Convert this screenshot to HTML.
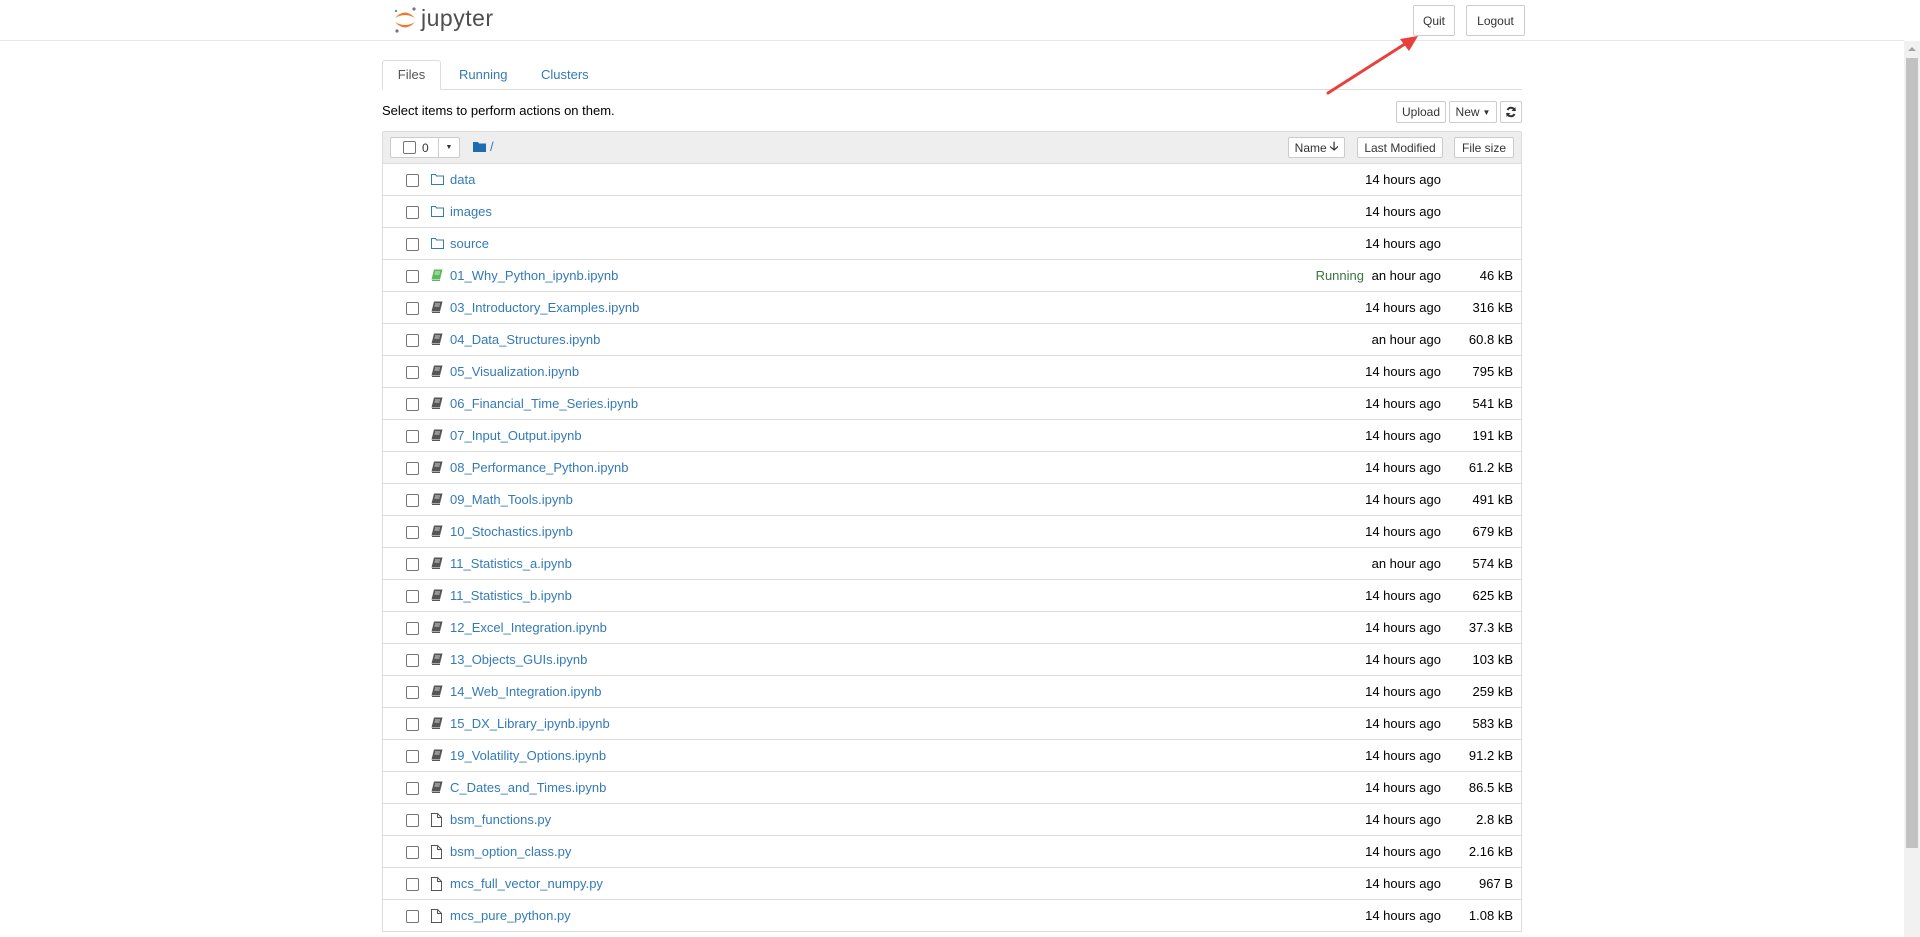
<!DOCTYPE html>
<html><head><meta charset="utf-8"><style>
*{box-sizing:border-box}
body{margin:0;width:1920px;height:937px;overflow:hidden;background:#fff;font-family:"Liberation Sans",Arial,sans-serif;font-size:13px;color:#000;position:relative}
.abs{position:absolute}
.btn{position:absolute;border:1px solid #ccc;background:#fff;border-radius:2px;font-size:12px;color:#333;text-align:center;display:flex;align-items:center;justify-content:center}
a{color:#337ab7;text-decoration:none}
.row{position:absolute;left:382px;width:1140px;height:32px;border-bottom:1px solid #ddd;border-left:1px solid #ddd;border-right:1px solid #ddd}
.cb{position:absolute;left:23px;top:10px;width:13px;height:13px;border:1px solid #767676;border-radius:2px;background:#fff}
.ic{position:absolute;left:48px;top:9px}
.nm{position:absolute;left:67px;top:8px;font-size:13px;color:#337ab7}
.tm{position:absolute;right:80px;top:8px;text-align:right}
.sz{position:absolute;right:8px;top:8px;text-align:right}
.run{position:absolute;right:157px;top:8px;color:#3c763d}
</style></head><body>
<!-- header -->
<svg class="abs" style="left:393px;top:6px" width="24" height="28" viewBox="0 0 24 28">
<path d="M2 12 Q12 1 22 12 Q12 6 2 12Z" fill="#f37726"/>
<path d="M2 16 Q12 27 22 16 Q12 22 2 16Z" fill="#f37726"/>
<circle cx="21" cy="3" r="1.6" fill="#767677"/><circle cx="3" cy="5" r="1.1" fill="#767677"/><circle cx="4" cy="25" r="1.6" fill="#767677"/>
</svg>
<div class="abs" style="left:421px;top:5px;font-size:23px;color:#4e4e4e;letter-spacing:0.5px">jupyter</div>
<div class="btn" style="left:1413px;top:5px;width:42px;height:31px">Quit</div>
<div class="btn" style="left:1466px;top:5px;width:59px;height:31px">Logout</div>
<div class="abs" style="left:0;top:40px;width:1904px;height:1px;background:#e7e7e7"></div>
<!-- scrollbar -->
<div class="abs" style="left:1904px;top:41px;width:16px;height:896px;background:#f1f1f1"></div>
<div class="abs" style="left:1906px;top:58px;width:12px;height:790px;background:#c1c1c1"></div>
<div class="abs" style="left:1908px;top:47px;width:0;height:0;border-left:4px solid transparent;border-right:4px solid transparent;border-bottom:4px solid #a3a3a3"></div>
<!-- tabs -->
<div class="abs" style="left:382px;top:89px;width:1140px;height:1px;background:#ddd"></div>
<div class="abs" style="left:382px;top:60px;width:59px;height:30px;border:1px solid #ddd;border-bottom:1px solid #fff;border-radius:3px 3px 0 0;background:#fff;text-align:center;line-height:28px;color:#555">Files</div>
<div class="abs" style="left:459px;top:67px;color:#337ab7">Running</div>
<div class="abs" style="left:541px;top:67px;color:#337ab7">Clusters</div>
<div class="abs" style="left:382px;top:103px">Select items to perform actions on them.</div>
<div class="btn" style="left:1396px;top:101px;width:50px;height:22px">Upload</div>
<div class="btn" style="left:1449px;top:101px;width:48px;height:22px">New <span style="font-size:8px;margin-left:3px">▼</span></div>
<div class="btn" style="left:1500px;top:101px;width:22px;height:22px"><svg width="12" height="12" viewBox="0 0 12 12"><path d="M10 5A4 4 0 0 0 2.5 4M2 7A4 4 0 0 0 9.5 8" stroke="#333" stroke-width="2" fill="none"/><path d="M10.5 1v4h-4z M1.5 11V7h4z" fill="#333"/></svg></div>
<!-- list header -->
<div class="abs" style="left:382px;top:131px;width:1140px;height:33px;background:#eee;border:1px solid #ddd;border-radius:2px 2px 0 0"></div>
<div class="btn" style="left:390px;top:137px;width:49px;height:21px;justify-content:flex-start;padding-left:12px;border-radius:2px 0 0 2px"><span style="display:inline-block;width:13px;height:13px;border:1px solid #767676;border-radius:2px;margin-right:6px"></span>0</div>
<div class="btn" style="left:438px;top:137px;width:22px;height:21px;border-radius:0 2px 2px 0;font-size:7px">▼</div>
<svg class="abs" style="left:473px;top:141px" width="13" height="11" viewBox="0 0 13 11"><path d="M0 1h5l1 1.5h7V11H0z" fill="#1e6cb0"/></svg>
<div class="abs" style="left:490px;top:139px;color:#337ab7">/</div>
<div class="btn" style="left:1288px;top:137px;width:57px;height:21px">Name <b style="margin-left:3px">🡣</b></div>
<div class="btn" style="left:1357px;top:137px;width:86px;height:21px">Last Modified</div>
<div class="btn" style="left:1454px;top:137px;width:60px;height:21px">File size</div>

<div id="rows"></div>
<script>
var F='<svg width="13" height="12" viewBox="0 0 13 12"><path d="M.5 1.5h4l1 1.5h7v8.5H.5z" fill="none" stroke="#337ab7"/></svg>';
var B=function(c){return '<svg width="12" height="12" viewBox="0 0 12 12"><path d="M3 .5h8.5L9 10.5H.5z" fill="'+c+'"/><path d="M1 11.5h8" stroke="'+c+'"/><path d="M4 3h5M3.5 5h5" stroke="#fff" stroke-width=".8"/></svg>'};
var P='<svg width="11" height="14" viewBox="0 0 11 14"><path d="M.5.5h6l4 4v9H.5z M6.5.5v4h4" fill="none" stroke="#555"/></svg>';
var rows=[
["data","F","14 hours ago",""],["images","F","14 hours ago",""],["source","F","14 hours ago",""],
["01_Why_Python_ipynb.ipynb","R","an hour ago","46 kB"],
["03_Introductory_Examples.ipynb","B","14 hours ago","316 kB"],
["04_Data_Structures.ipynb","B","an hour ago","60.8 kB"],
["05_Visualization.ipynb","B","14 hours ago","795 kB"],
["06_Financial_Time_Series.ipynb","B","14 hours ago","541 kB"],
["07_Input_Output.ipynb","B","14 hours ago","191 kB"],
["08_Performance_Python.ipynb","B","14 hours ago","61.2 kB"],
["09_Math_Tools.ipynb","B","14 hours ago","491 kB"],
["10_Stochastics.ipynb","B","14 hours ago","679 kB"],
["11_Statistics_a.ipynb","B","an hour ago","574 kB"],
["11_Statistics_b.ipynb","B","14 hours ago","625 kB"],
["12_Excel_Integration.ipynb","B","14 hours ago","37.3 kB"],
["13_Objects_GUIs.ipynb","B","14 hours ago","103 kB"],
["14_Web_Integration.ipynb","B","14 hours ago","259 kB"],
["15_DX_Library_ipynb.ipynb","B","14 hours ago","583 kB"],
["19_Volatility_Options.ipynb","B","14 hours ago","91.2 kB"],
["C_Dates_and_Times.ipynb","B","14 hours ago","86.5 kB"],
["bsm_functions.py","P","14 hours ago","2.8 kB"],
["bsm_option_class.py","P","14 hours ago","2.16 kB"],
["mcs_full_vector_numpy.py","P","14 hours ago","967 B"],
["mcs_pure_python.py","P","14 hours ago","1.08 kB"]];
var h='';
rows.forEach(function(r,i){
 var ic=r[1]=="F"?F:r[1]=="P"?P:r[1]=="R"?B("#5cb85c"):B("#555");
 h+='<div class="row" style="top:'+(164+32*i)+'px"><div class="cb"></div><div class="ic">'+ic+'</div><div class="nm">'+r[0]+'</div>'+(r[1]=="R"?'<div class="run">Running</div>':'')+'<div class="tm">'+r[2]+'</div><div class="sz">'+r[3]+'</div></div>';
});
document.getElementById('rows').innerHTML=h;
</script>
<!-- arrow -->
<svg class="abs" style="left:1320px;top:28px" width="110" height="75" viewBox="0 0 110 75">
<path d="M8 65L88 14" stroke="#e8403a" stroke-width="3" stroke-linecap="round"/>
<path d="M98 8L80 11L89 23Z" fill="#e8403a"/>
</svg>
</body></html>
